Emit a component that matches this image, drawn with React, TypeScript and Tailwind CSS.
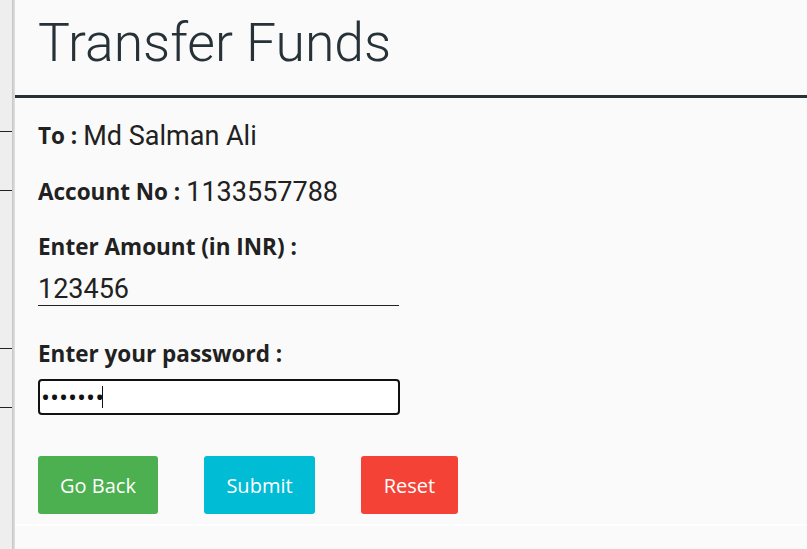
import React from 'react';

const App: React.FC = () => {
  return (
    <div className="flex h-[549px] w-[807px] overflow-hidden bg-[#fafafa]">
      {/* background page strip */}
      <div className="flex w-[12px] flex-col bg-[#eeeeee]">
        <div className="mt-[131px] h-px bg-[#222]" />
        <div className="mt-[58px] h-px bg-[#222]" />
        <div className="mt-[157px] h-px bg-[#222]" />
        <div className="mt-[58px] h-px bg-[#222]" />
      </div>
      <div className="w-[3px] bg-gradient-to-r from-[#c4c4c4] to-[#e2e2e2]" />

      <div className="flex flex-1 flex-col">
        <div className="h-[98px] border-b-[3px] border-[#263238] pl-[23px] pt-[16px]">
          <h1 className="font-['Roboto',sans-serif] text-[53.5px] font-light leading-none text-[#263238]">
            Transfer Funds
          </h1>
        </div>

        <form className="flex flex-col border-b-2 border-white pb-[10px] pl-[23px] font-['Open_Sans',sans-serif] text-[#212121]">
          <p className="mt-[24px] flex h-[28px] items-center gap-[6px]">
            <span className="text-[22.5px] font-bold">To :</span>
            <span className="font-['Roboto',sans-serif] text-[27px]">Md Salman Ali</span>
          </p>
          <p className="mt-[28px] flex h-[28px] items-center gap-[6px]">
            <span className="text-[22.5px] font-bold">Account No :</span>
            <span className="font-['Roboto',sans-serif] text-[27px]">1133557788</span>
          </p>
          <label className="mt-[27px] flex h-[28px] items-center text-[22.5px] font-bold">
            Enter Amount (in INR) :
          </label>
          <input
            type="text"
            defaultValue="123456"
            className="mt-[8px] h-[37px] w-[361px] border-b border-[#222] bg-transparent px-0 pt-[4px] font-['Roboto',sans-serif] text-[27px] text-[#212121] outline-none"
          />
          <label className="mt-[34px] flex h-[28px] items-center text-[22.5px] font-bold">
            Enter your password :
          </label>
          <div className="relative mt-[11px] w-[362px]">
            <input
              type="password"
              defaultValue="1234567"
              className="h-[36px] w-full rounded-[4px] border-2 border-[#111] bg-white px-[1px] font-['Open_Sans',sans-serif] text-[24px] text-[#111] outline-none"
            />
            <span className="absolute left-[64px] top-[7px] h-[22px] w-px bg-[#111]" />
          </div>

          <div className="mt-[41px] flex gap-[46px] text-[20px] text-white">
            <button type="button" className="h-[58px] w-[120px] rounded-[3px] bg-[#4caf50] pt-[2px]">
              Go Back
            </button>
            <button type="submit" className="h-[58px] w-[111px] rounded-[3px] bg-[#00bcd4] pt-[2px]">
              Submit
            </button>
            <button type="reset" className="h-[58px] w-[97px] rounded-[3px] bg-[#f44336] pt-[2px]">
              Reset
            </button>
          </div>
        </form>
      </div>
    </div>
  );
};

export default App;
